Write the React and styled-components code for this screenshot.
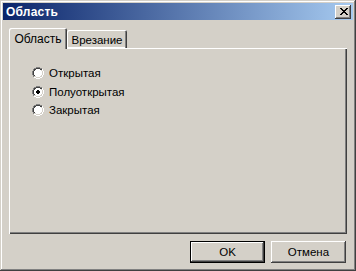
import React, { useState } from "react";
import styled, { createGlobalStyle } from "styled-components";

const GlobalStyle = createGlobalStyle`
  html, body {
    margin: 0;
    padding: 0;
    background: #d4d0c8;
  }
  * {
    box-sizing: border-box;
  }
`;

const options = ["Открытая", "Полуоткрытая", "Закрытая"];

const App = () => {
  const [selected, setSelected] = useState(1);
  const [tab, setTab] = useState(0);

  return (
    <>
      <GlobalStyle />
      <Window>
        <TitleBar>
          <Title>Область</Title>
          <CloseButton>
            <svg width="8" height="7" viewBox="0 0 8 7" shapeRendering="crispEdges">
              <path
                d="M0 0h2v1h-2zM6 0h2v1h-2zM1 1h2v1h-2zM5 1h2v1h-2zM2 2h4v1h-4zM3 3h2v1h-2zM2 4h4v1h-4zM1 5h2v1h-2zM5 5h2v1h-2zM0 6h2v1h-2zM6 6h2v1h-2z"
                fill="#000"
              />
            </svg>
          </CloseButton>
        </TitleBar>
        <Body>
          <TabRow>
            <Tab active={tab === 0} width={58} onClick={() => setTab(0)}>
              Область
            </Tab>
            <Tab active={tab === 1} width={60} onClick={() => setTab(1)}>
              Врезание
            </Tab>
          </TabRow>
          <Panel>
            <RadioList>
              {options.map((label, i) => (
                <RadioRow key={label} onClick={() => setSelected(i)}>
                  <Radio checked={selected === i} />
                  <RadioLabel>{label}</RadioLabel>
                </RadioRow>
              ))}
            </RadioList>
          </Panel>
          <ButtonRow>
            <DialogButton isDefault>OK</DialogButton>
            <DialogButton>Отмена</DialogButton>
          </ButtonRow>
        </Body>
      </Window>
    </>
  );
};

const Radio = ({ checked }) => (
  <RadioBox>
    <svg width="12" height="12" viewBox="0 0 12 12" shapeRendering="crispEdges">
      {/* outer shadow, top-left */}
      <path d="M4 0h4v1h-4zM2 1h2v1h-2zM8 1h2v1h-2zM1 2h1v2h-1zM0 4h1v4h-1zM1 8h1v2h-1z" fill="#808080" />
      {/* outer highlight, bottom-right */}
      <path d="M10 2h1v2h-1zM11 4h1v4h-1zM10 8h1v2h-1zM8 10h2v1h-2zM2 10h2v1h-2zM4 11h4v1h-4z" fill="#ffffff" />
      {/* inner dark */}
      <path d="M4 1h4v1h-4zM2 2h2v1h-2zM8 2h2v1h-2zM2 3h1v1h-1zM1 4h1v4h-1zM2 8h1v1h-1z" fill="#404040" />
      {/* inner light */}
      <path d="M9 3h1v1h-1zM10 4h1v4h-1zM9 8h1v1h-1zM8 9h2v1h-2zM2 9h2v1h-2zM4 10h4v1h-4z" fill="#d4d0c8" />
      {/* face */}
      <path d="M4 2h4v1h-4zM3 3h6v1h-6zM2 4h8v4h-8zM3 8h6v1h-6zM4 9h4v1h-4z" fill="#ffffff" />
      {checked && <path d="M5 4h2v1h-2zM4 5h4v2h-4zM5 7h2v1h-2z" fill="#000000" />}
    </svg>
  </RadioBox>
);

export default App;

const Window = styled.div`
  width: 356px;
  height: 271px;
  padding: 3px;
  display: flex;
  flex-direction: column;
  background: #d4d0c8;
  box-shadow: inset -1px -1px #404040, inset 1px 1px #d4d0c8,
    inset -2px -2px #808080, inset 2px 2px #ffffff;
  font-family: "Liberation Sans", Arial, sans-serif;
  font-size: 11px;
  color: #000;
`;

const TitleBar = styled.div`
  height: 18px;
  display: flex;
  align-items: center;
  justify-content: space-between;
  padding: 0 2px 0 3px;
  background: linear-gradient(to right, #0a246a, #a6caf0);
`;

const Title = styled.span`
  color: #fff;
  font-weight: bold;
  font-size: 12px;
  letter-spacing: 0.2px;
`;

const CloseButton = styled.div`
  width: 16px;
  height: 14px;
  display: flex;
  align-items: center;
  justify-content: center;
  background: #d4d0c8;
  box-shadow: inset -1px -1px #404040, inset 1px 1px #ffffff,
    inset -2px -2px #808080, inset 2px 2px #d4d0c8;
  padding-left: 1px;
`;

const Body = styled.div`
  flex: 1;
  display: flex;
  flex-direction: column;
  padding: 7px 6px 5px 6px;
`;

const TabRow = styled.div`
  display: flex;
  align-items: flex-end;
  height: 21px;
  position: relative;
  z-index: 1;
`;

const Tab = styled.div`
  width: ${(p) => p.width}px;
  height: ${(p) => (p.active ? 21 : 18)}px;
  display: flex;
  align-items: center;
  justify-content: center;
  padding-top: ${(p) => (p.active ? 0 : 1)}px;
  background: #d4d0c8;
  margin-bottom: ${(p) => (p.active ? -1 : 0)}px;
  border-radius: 2px 2px 0 0;
  box-shadow: ${(p) =>
    p.active
      ? "inset 1px 1px #ffffff, inset -1px 0 #404040, inset -2px 0 #808080"
      : "inset 1px 1px #ffffff, inset -1px 0 #404040, inset -2px 0 #808080, inset 0 -1px #ffffff"};
  font-size: ${(p) => (p.active ? 12 : 11.5)}px;
  cursor: default;
`;

const Panel = styled.div`
  height: 186px;
  padding: 16px 0 0 23px;
  background: #d4d0c8;
  box-shadow: inset 1px 1px #ffffff, inset -1px -1px #404040,
    inset -2px -2px #808080;
`;

const RadioList = styled.div`
  display: flex;
  flex-direction: column;
`;

const RadioRow = styled.div`
  height: 18.5px;
  display: flex;
  align-items: center;
  gap: 5px;
  cursor: default;
`;

const RadioBox = styled.span`
  width: 12px;
  height: 12px;
  display: inline-flex;
`;

const RadioLabel = styled.span`
  font-size: 11.5px;
`;

const ButtonRow = styled.div`
  display: flex;
  justify-content: flex-end;
  gap: 6px;
  margin-top: 7px;
  padding-right: 1px;
`;

const DialogButton = styled.div`
  width: 75px;
  height: 22px;
  display: flex;
  align-items: center;
  justify-content: center;
  background: #d4d0c8;
  font-size: 11.5px;
  box-shadow: ${(p) =>
    p.isDefault
      ? "inset 0 0 0 1px #000000, inset -2px -2px #404040, inset 2px 2px #ffffff, inset -3px -3px #808080"
      : "inset -1px -1px #404040, inset 1px 1px #ffffff, inset -2px -2px #808080, inset 2px 2px #d4d0c8"};
`;
